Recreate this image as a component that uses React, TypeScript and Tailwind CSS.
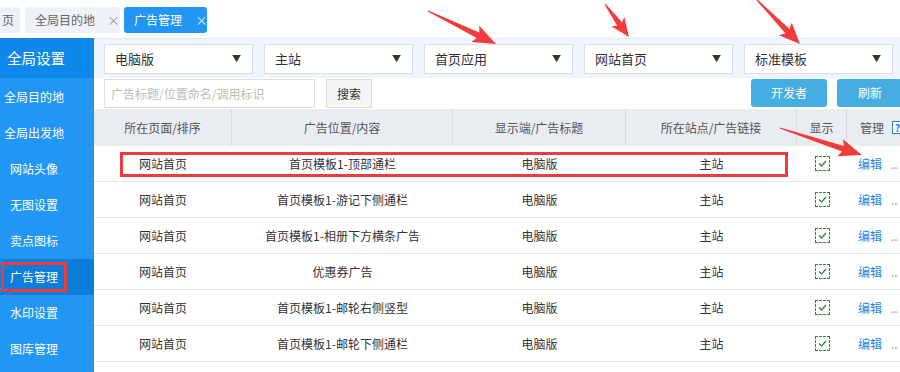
import React from 'react';

const menu = [
    { name: '全局目的地', pl: 'pl-[4px]' },
    { name: '全局出发地', pl: 'pl-[4px]' },
    { name: '网站头像', pl: 'pl-[10px]' },
    { name: '无图设置', pl: 'pl-[10px]' },
    { name: '卖点图标', pl: 'pl-[10px]' },
    { name: '广告管理', pl: 'pl-[10px]', active: true },
    { name: '水印设置', pl: 'pl-[10px]' },
    { name: '图库管理', pl: 'pl-[10px]' },
];

const filters = ['电脑版', '主站', '首页应用', '网站首页', '标准模板'];

const rows = [
    '首页模板1-顶部通栏',
    '首页模板1-游记下侧通栏',
    '首页模板1-相册下方横条广告',
    '优惠券广告',
    '首页模板1-邮轮右侧竖型',
    '首页模板1-邮轮下侧通栏',
];

const cols = 'grid grid-cols-[138px_221px_173px_171px_50px_1fr]';

// red callout arrows drawn over the screenshot
function arrowPoints(x1: number, y1: number, x2: number, y2: number, hl: number, hw: number) {
    const len = Math.hypot(x2 - x1, y2 - y1);
    const dx = (x2 - x1) / len;
    const dy = (y2 - y1) / len;
    const nx = -dy;
    const ny = dx;
    const bx = x2 - dx * hl;
    const by = y2 - dy * hl;
    const cx = x2 - dx * (hl + 3);
    const cy = y2 - dy * (hl + 3);
    const pts = [
        [x1 + nx * 0.6, y1 + ny * 0.6],
        [bx + nx * 3, by + ny * 3],
        [cx + nx * hw, cy + ny * hw],
        [x2, y2],
        [cx - nx * hw, cy - ny * hw],
        [bx - nx * 3, by - ny * 3],
        [x1 - nx * 0.6, y1 - ny * 0.6],
    ];
    return pts.map((p) => p.join(',')).join(' ');
}

function Check() {
    return (
        <span className="inline-flex w-[15px] h-[15px] border border-dashed border-[#2e8b3a] items-center justify-center">
            <svg width="9" height="7" viewBox="0 0 9 7">
                <path d="M1 3.5 L3.5 6 L8 1" fill="none" stroke="#2e8b3a" strokeWidth="1.3" />
            </svg>
        </span>
    );
}

export default function App() {
    return (
        <div
            className="relative w-[900px] h-[372px] overflow-hidden bg-white text-[12px] whitespace-nowrap"
            style={{ fontFamily: '"Noto Sans CJK SC", "Microsoft YaHei", sans-serif' }}
        >
            {/* tabs */}
            <div className="h-[38px] flex items-start pt-[7px] gap-[4px]">
                <div className="shrink-0 h-[26px] w-[20px] bg-[#eef1f7] rounded-r-[3px] flex items-center justify-end pr-[6px] text-[#666]">页</div>
                <div className="shrink-0 h-[26px] ml-[1px] w-[95px] bg-[#eef1f7] rounded-[3px] flex items-center pl-[10px] text-[#666]">
                    全局目的地<span className="ml-[12px] text-[#999] text-[13px]">×</span>
                </div>
                <div className="shrink-0 h-[26px] w-[83px] bg-[#2196f3] rounded-[3px] flex items-center pl-[10px] text-white">
                    广告管理<span className="ml-[13px] text-[13px] text-[#d8ecfd]">×</span>
                </div>
            </div>

            <div className="flex">
                {/* sidebar */}
                <div className="w-[94px] h-[334px] bg-[#2196f3] text-white shrink-0">
                    <div className="h-[40px] bg-[#0f88eb] flex items-center pl-[7px] text-[14.5px]">全局设置</div>
                    <div className="h-[1px]" />
                    {menu.map((m) => (
                        <div key={m.name} className={`h-[36px] flex items-center ${m.pl} ${m.active ? 'bg-[#0c7dd8]' : ''}`}>
                            {m.active ? (
                                <span className="ml-[-9px] border-[3px] border-[#ef3b3b] px-[6px] h-[30px] flex items-center">{m.name}</span>
                            ) : (
                                m.name
                            )}
                        </div>
                    ))}
                </div>

                {/* main */}
                <div className="flex-1 min-w-0">
                    <div className="h-[40px] bg-[#eef5fc] border-t border-[#e1eaf4] flex items-center pl-[10px] gap-[11px]">
                        {filters.map((f) => (
                            <div key={f} className="shrink-0 w-[149px] h-[30px] bg-white border border-[#d9dee5] flex items-center justify-between pl-[10px] pr-[11px] text-[13px] text-[#333]">
                                {f}
                                <span className="text-[9px] text-[#333]">▼</span>
                            </div>
                        ))}
                    </div>
                    <div className="h-[31px] flex items-start pl-[10px] pt-[1px]">
                        <div className="w-[211px] h-[29px] border border-[#dcdfe5] flex items-center pl-[6px] text-[#bbb]">广告标题/位置命名/调用标识</div>
                        <div className="ml-[11px] w-[46px] h-[29px] border border-[#dcdcdc] bg-[#f5f5f5] flex items-center justify-center text-[#333]">搜索</div>
                        <div className="ml-auto flex gap-[10px]">
                            <div className="w-[76px] h-[28px] rounded-[3px] bg-[#45ade2] text-white flex items-center justify-center">开发者</div>
                            <div className="w-[63px] h-[28px] rounded-l-[3px] bg-[#45ade2] text-white flex items-center pl-[21px]">刷新</div>
                        </div>
                    </div>

                    {/* table */}
                    <div className={`${cols} h-[37px] bg-[#e9ecf1] text-[#555]`}>
                        <div className="flex items-center justify-center border-r border-[#d9dde3]">所在页面/排序</div>
                        <div className="flex items-center justify-center border-r border-[#d9dde3]">广告位置/内容</div>
                        <div className="flex items-center justify-center border-r border-[#d9dde3]">显示端/广告标题</div>
                        <div className="flex items-center justify-center border-r border-[#d9dde3]">所在站点/广告链接</div>
                        <div className="flex items-center justify-center border-r border-[#d9dde3]">显示</div>
                        <div className="flex items-center pl-[13px] gap-[8px] overflow-visible">
                            管理
                            <span className="shrink-0 w-[11px] h-[13px] border border-[#2b7fd8] bg-white text-[#2b7fd8] text-[10px] font-bold leading-none flex items-center justify-center">?</span>
                        </div>
                    </div>
                    {rows.map((r, i) => (
                        <div key={r} className={`${cols} h-[36px] border-b border-[#e3e5e8] text-[#333] relative`}>
                            {i === 0 && (
                                <div className="absolute left-[26px] top-[6px] w-[668px] h-[25px] border-[3px] border-[#ef3b3b]" />
                            )}
                            <div className="flex items-center justify-center">网站首页</div>
                            <div className="flex items-center justify-center">{r}</div>
                            <div className="flex items-center justify-center">电脑版</div>
                            <div className="flex items-center justify-center">主站</div>
                            <div className="flex items-center justify-center"><Check /></div>
                            <div className="flex items-center pl-[11px] gap-[9px]">
                                <span className="text-[#1e88e5]">编辑</span>
                                <span className="text-[#999]">..</span>
                            </div>
                        </div>
                    ))}
                </div>
            </div>

            <svg className="absolute inset-0 pointer-events-none" width="900" height="372">
                <polygon points={arrowPoints(428, 11, 496, 44, 20, 9)} fill="#f23b3b" />
                <polygon points={arrowPoints(605, 4, 629, 37, 16, 8)} fill="#f23b3b" />
                <polygon points={arrowPoints(757, 0, 800, 44, 18, 9)} fill="#f23b3b" />
                <polygon points={arrowPoints(780, 128, 862, 155, 20, 9)} fill="#f23b3b" />
            </svg>
        </div>
    );
}
